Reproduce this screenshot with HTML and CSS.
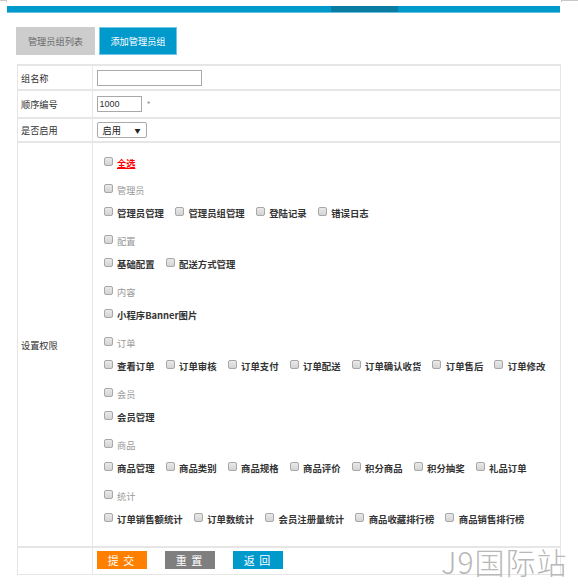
FILE: index.html
```html
<!DOCTYPE html>
<html lang="zh-CN">
<head>
<meta charset="utf-8">
<title>添加管理员组</title>
<link rel="stylesheet" href="styles.css">
</head>
<body>
<div class="topframe"><span class="mark-l"></span><span class="mark-r"></span></div>
<div class="bar"><span class="bar-dark"></span></div>
<div class="tabs">
  <a class="tab">管理员组列表</a>
  <a class="tab active">添加管理员组</a>
</div>
<table class="form">
  <colgroup><col class="c-lbl"><col class="c-val"></colgroup>
  <tr class="r-name">
    <td class="lbl">组名称</td>
    <td class="val"><span class="txt w-name"></span></td>
  </tr>
  <tr class="r-order">
    <td class="lbl">顺序编号</td>
    <td class="val"><span class="txt w-order">1000</span><span class="star">*</span></td>
  </tr>
  <tr class="r-enable">
    <td class="lbl">是否启用</td>
    <td class="val"><span class="sel"><span>启用</span><span class="arrow">▼</span></span></td>
  </tr>
  <tr class="r-perm">
    <td class="lbl">设置权限</td>
    <td class="perm">
      <div class="grp">
        <div class="line head"><span class="cb"></span><span class="all">全选</span></div>
      </div>
      <div class="grp">
        <div class="line head"><span class="cb"></span><span>管理员</span></div>
        <div class="line items">
          <span class="item"><span class="cb"></span>管理员管理</span>
          <span class="item"><span class="cb"></span>管理员组管理</span>
          <span class="item"><span class="cb"></span>登陆记录</span>
          <span class="item"><span class="cb"></span>错误日志</span>
        </div>
      </div>
      <div class="grp">
        <div class="line head"><span class="cb"></span><span>配置</span></div>
        <div class="line items">
          <span class="item"><span class="cb"></span>基础配置</span>
          <span class="item"><span class="cb"></span>配送方式管理</span>
        </div>
      </div>
      <div class="grp">
        <div class="line head"><span class="cb"></span><span>内容</span></div>
        <div class="line items">
          <span class="item"><span class="cb"></span>小程序Banner图片</span>
        </div>
      </div>
      <div class="grp">
        <div class="line head"><span class="cb"></span><span>订单</span></div>
        <div class="line items">
          <span class="item"><span class="cb"></span>查看订单</span>
          <span class="item"><span class="cb"></span>订单审核</span>
          <span class="item"><span class="cb"></span>订单支付</span>
          <span class="item"><span class="cb"></span>订单配送</span>
          <span class="item"><span class="cb"></span>订单确认收货</span>
          <span class="item"><span class="cb"></span>订单售后</span>
          <span class="item"><span class="cb"></span>订单修改</span>
        </div>
      </div>
      <div class="grp">
        <div class="line head"><span class="cb"></span><span>会员</span></div>
        <div class="line items">
          <span class="item"><span class="cb"></span>会员管理</span>
        </div>
      </div>
      <div class="grp">
        <div class="line head"><span class="cb"></span><span>商品</span></div>
        <div class="line items">
          <span class="item"><span class="cb"></span>商品管理</span>
          <span class="item"><span class="cb"></span>商品类别</span>
          <span class="item"><span class="cb"></span>商品规格</span>
          <span class="item"><span class="cb"></span>商品评价</span>
          <span class="item"><span class="cb"></span>积分商品</span>
          <span class="item"><span class="cb"></span>积分抽奖</span>
          <span class="item"><span class="cb"></span>礼品订单</span>
        </div>
      </div>
      <div class="grp">
        <div class="line head"><span class="cb"></span><span>统计</span></div>
        <div class="line items">
          <span class="item"><span class="cb"></span>订单销售额统计</span>
          <span class="item"><span class="cb"></span>订单数统计</span>
          <span class="item"><span class="cb"></span>会员注册量统计</span>
          <span class="item"><span class="cb"></span>商品收藏排行榜</span>
          <span class="item"><span class="cb"></span>商品销售排行榜</span>
        </div>
      </div>
    </td>
  </tr>
  <tr class="r-btns">
    <td class="lbl"></td>
    <td class="val btns">
      <div class="btn-row">
        <span class="btn submit">提 交</span>
        <span class="btn reset">重 置</span>
        <span class="btn back">返 回</span>
      </div>
    </td>
  </tr>
</table>
<div class="watermark">J9国际站</div>
</body>
</html>
```

FILE: styles.css
```css
html, body {
  margin: 0;
  padding: 0;
  background: #fff;
}
body {
  position: relative;
  width: 578px;
  height: 584px;
  overflow: hidden;
  font-family: "Noto Sans CJK SC", "Microsoft YaHei", sans-serif;
  font-size: 9.2px;
  color: #333;
}
.topframe {
  height: 6px;
  display: flex;
  justify-content: space-between;
}
.mark-l {
  width: 7px;
  height: 2px;
  border-top: 1px solid #c8c8c8;
  border-right: 1px solid #c8c8c8;
  box-sizing: border-box;
}
.mark-r {
  width: 17px;
  height: 2px;
  border-top: 1px solid #c8c8c8;
  border-left: 1px solid #c8c8c8;
  box-sizing: border-box;
}
.bar {
  margin: 0 18px 0 7px;
  height: 6px;
  background: #0099cc;
  border-bottom: 1px solid #6cc0df;
  display: flex;
}
.bar-dark {
  margin-left: 324px;
  width: 67px;
  background: #0a7ca2;
}
.tabs {
  display: flex;
  gap: 4px;
  margin: 14px 0 0 16px;
}
.tab {
  height: 28px;
  display: flex;
  align-items: center;
  justify-content: center;
  box-sizing: border-box;
  font-size: 9.2px;
}
.tab:first-child {
  width: 79px;
  background: #cdcdcd;
  color: #6a6a6a;
}
.tab.active {
  width: 78px;
  background: #0099cc;
  color: #fff;
  border: 1px solid #72c6e4;
}
.form {
  margin: 9px 0 0 17px;
  width: 544px;
  border-collapse: collapse;
  table-layout: fixed;
}
.c-lbl { width: 75px; }
.form td {
  border: 1px solid #e6e6e6;
  border-top-width: 2px;
  padding: 0;
}
.form .lbl {
  padding-left: 3px;
  color: #333;
}
.form .val {
  padding-left: 3.5px;
}
.r-name td { height: 23px; }
.r-order td { height: 26px; }
.r-enable td { height: 22px; }
.r-btns td { height: 23px; }
.val, .lbl { vertical-align: middle; }
.txt {
  display: inline-flex;
  align-items: center;
  box-sizing: border-box;
  height: 16px;
  border: 1px solid #a9a9a9;
  background: #fff;
  vertical-align: middle;
  padding-left: 2px;
  font-family: "Liberation Sans", Arial, sans-serif;
  font-size: 9px;
  color: #333;
}
.w-name { width: 105px; }
.w-order { width: 45px; }
.star {
  margin-left: 5px;
  color: #999;
  font-size: 9px;
  vertical-align: middle;
}
.sel {
  display: inline-flex;
  align-items: center;
  justify-content: space-between;
  box-sizing: border-box;
  width: 50px;
  height: 16px;
  border: 1px solid #a9a9a9;
  border-radius: 2px;
  background: #fff;
  padding: 0 5px 0 5px;
  vertical-align: middle;
  color: #222;
}
.arrow {
  font-size: 6px;
  color: #222;
}
.form .perm {
  padding: 9px 0 10px 10.5px;
  vertical-align: top;
}
.grp {
  margin-bottom: 5px;
}
.line {
  display: flex;
  align-items: center;
}
.line.head {
  height: 22px;
  color: #999;
}
.line.items {
  height: 24px;
  gap: 11px;
  font-size: 9.4px;
  font-weight: bold;
  color: #333;
}
.item {
  display: flex;
  align-items: center;
  white-space: nowrap;
}
.cb {
  display: inline-block;
  box-sizing: border-box;
  width: 9px;
  height: 9px;
  border: 1px solid #a8a8a8;
  border-radius: 2px;
  background: linear-gradient(#e9e9e9, #d4d4d4);
  margin-right: 4.5px;
  margin-bottom: 3px;
  flex: none;
}
.all {
  color: #ff0000;
  font-weight: bold;
  text-decoration: underline;
}
.form .btns {
  vertical-align: top;
  padding-top: 3px;
}
.btn-row {
  display: flex;
  gap: 18px;
}
.btn {
  display: flex;
  align-items: center;
  justify-content: center;
  width: 50px;
  height: 18px;
  color: #fff;
  font-size: 11px;
  letter-spacing: 1px;
}
.submit { background: #ff7f00; }
.reset { background: #7f7f7f; }
.back { background: #0099cc; }
.watermark {
  position: absolute;
  left: 441px;
  top: 541px;
  font-size: 30px;
  line-height: 40px;
  letter-spacing: 1px;
  font-weight: 300;
  color: #b8b8b8;
  white-space: nowrap;
}
```
